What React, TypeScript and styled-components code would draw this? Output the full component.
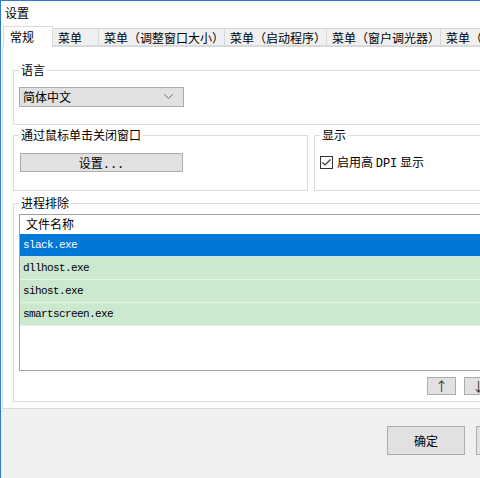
import styled, { createGlobalStyle } from "styled-components";

const GlobalStyle = createGlobalStyle`
  html, body {
    margin: 0;
    padding: 0;
    background: #ffffff;
    overflow: hidden;
  }
  * {
    box-sizing: border-box;
  }
`;

const uiFont = `"Noto Sans CJK SC", "Noto Sans", sans-serif`;
const monoFont = `"Liberation Mono", "Noto Sans CJK SC", monospace`;

const tabs = [
  "常规",
  "菜单",
  "菜单（调整窗口大小）",
  "菜单（启动程序）",
  "菜单（窗户调光器）",
  "菜单（托盘）",
];

const processes = ["slack.exe", "dllhost.exe", "sihost.exe", "smartscreen.exe"];

function App() {
  return (
    <>
      <GlobalStyle />
      <Window>
        <TitleBar>设置</TitleBar>
        <TabStrip>
          {tabs.map((label, i) => (
            <Tab key={label} $active={i === 0}>
              {label}
            </Tab>
          ))}
        </TabStrip>
        <TabPage>
          <GroupBox>
            <Legend>语言</Legend>
            <Select>
              <span>简体中文</span>
              <svg width="9" height="6" viewBox="0 0 9 6">
                <polyline points="0.5,0.5 4.5,4.5 8.5,0.5" fill="none" stroke="#6a6a6a" strokeWidth="1" />
              </svg>
            </Select>
          </GroupBox>

          <TwoColumns>
            <GroupBox $pad={18}>
              <Legend>通过鼠标单击关闭窗口</Legend>
              <WideButton>
                设置<Mono>...</Mono>
              </WideButton>
            </GroupBox>
            <GroupBox $pad={18}>
              <Legend>显示</Legend>
              <CheckRow>
                <CheckBox>
                  <svg width="11" height="11" viewBox="0 0 11 11">
                    <polyline points="1.5,5.5 4,8 9.5,2.5" fill="none" stroke="#333" strokeWidth="1.2" />
                  </svg>
                </CheckBox>
                <span>
                  启用高 <Mono>DPI</Mono> 显示
                </span>
              </CheckRow>
            </GroupBox>
          </TwoColumns>

          <GroupBox $pad={6} $gap={4}>
            <Legend>进程排除</Legend>
            <ListBox>
              <ListHeader>文件名称</ListHeader>
              {processes.map((name, i) => (
                <ListRow key={name} $selected={i === 0}>
                  {name}
                </ListRow>
              ))}
            </ListBox>
            <ArrowRow>
              <ArrowButton>↑</ArrowButton>
              <ArrowButton>↓</ArrowButton>
            </ArrowRow>
          </GroupBox>
        </TabPage>
        <Footer>
          <DialogButton>确定</DialogButton>
          <DialogButton>取消</DialogButton>
        </Footer>
      </Window>
    </>
  );
}

export default App;

const Window = styled.div`
  width: 566px;
  height: 478px;
  display: flex;
  flex-direction: column;
  border-left: 1px solid #2f7ccf;
  border-top: 1px solid #2f7ccf;
  background: #ffffff;
  font-family: ${uiFont};
  font-size: 12px;
  color: #000;
`;

const TitleBar = styled.div`
  height: 25px;
  padding-left: 4px;
  line-height: 24px;
  font-size: 12px;
`;

const TabStrip = styled.div`
  display: flex;
  align-items: flex-end;
  height: 21px;
  padding-left: 1px;
  margin: 0 1px;
  border-bottom: 1px solid #d9d9d9;
`;

const Tab = styled.div<{ $active?: boolean }>`
  flex: none;
  position: relative;
  min-width: ${({ $active }) => ($active ? "50px" : "46px")};
  height: ${({ $active }) => ($active ? "21px" : "18px")};
  margin-bottom: ${({ $active }) => ($active ? "-1px" : "0")};
  padding: 0 0 0 ${({ $active }) => ($active ? "6px" : "5px")};
  line-height: ${({ $active }) => ($active ? "19px" : "17px")};
  white-space: nowrap;
  background: ${({ $active }) => ($active ? "#ffffff" : "#f0f0f0")};
  border: 1px solid #d9d9d9;
  border-bottom: ${({ $active }) => ($active ? "none" : "1px solid #d9d9d9")};
  border-left: ${({ $active }) => ($active ? "1px solid #d9d9d9" : "none")};
  z-index: ${({ $active }) => ($active ? 1 : 0)};
`;

const TabPage = styled.div`
  display: flex;
  flex-direction: column;
  height: 362px;
  margin: 0 1px;
  padding: 15px 10px 0;
  background: #ffffff;
  border: 1px solid #d9d9d9;
  border-top: none;
`;

const GroupBox = styled.fieldset<{ $pad?: number; $gap?: number }>`
  min-width: 0;
  margin: ${({ $gap }) => $gap ?? 0}px 0 0;
  padding: 0 5px ${({ $pad }) => $pad ?? 17}px;
  border: 1px solid #dcdcdc;
`;

const Legend = styled.legend`
  padding: 0 2px;
  margin-left: 0;
  line-height: 16px;
  font-size: 12px;
`;

const TwoColumns = styled.div`
  display: grid;
  grid-template-columns: 295px 1fr;
  column-gap: 6px;
  margin-top: 2px;
`;

const Select = styled.div`
  display: flex;
  align-items: center;
  justify-content: space-between;
  width: 165px;
  height: 20px;
  margin-top: 9px;
  padding: 0 10px 0 3px;
  background: #e1e1e1;
  border: 1px solid #adadad;
  line-height: 18px;
`;

const WideButton = styled.div`
  width: 163px;
  height: 19px;
  margin-top: 10px;
  margin-left: 1px;
  text-align: center;
  line-height: 17px;
  background: #e1e1e1;
  border: 1px solid #adadad;
`;

const Mono = styled.span`
  font-family: ${monoFont};
  font-size: 12px;
  letter-spacing: 0;
`;

const CheckRow = styled.div`
  display: flex;
  align-items: center;
  gap: 4px;
  height: 19px;
  margin-top: 10px;
  line-height: 16px;
`;

const CheckBox = styled.div`
  display: flex;
  align-items: center;
  justify-content: center;
  width: 13px;
  height: 13px;
  background: #ffffff;
  border: 1px solid #333333;
`;

const ListBox = styled.div`
  height: 157px;
  margin-top: 3px;
  background: #ffffff;
  border: 1px solid #a0a0a0;
  border-right: none;
  overflow: hidden;
`;

const ListHeader = styled.div`
  height: 19px;
  padding-left: 6px;
  line-height: 18px;
`;

const ListRow = styled.div<{ $selected?: boolean }>`
  height: 23px;
  padding-left: 3px;
  line-height: 22px;
  font-family: ${monoFont};
  font-size: 11px;
  letter-spacing: -0.6px;
  color: ${({ $selected }) => ($selected ? "#ffffff" : "#000000")};
  background: ${({ $selected }) => ($selected ? "#0078d7" : "#cce8cf")};
  border-bottom: 1px solid ${({ $selected }) => ($selected ? "#c8e4f0" : "#e6f4e8")};
`;

const ArrowRow = styled.div`
  display: flex;
  justify-content: flex-end;
  gap: 8px;
  margin-top: 6px;
  padding-right: 55px;
`;

const ArrowButton = styled.div`
  width: 29px;
  height: 18px;
  text-align: center;
  line-height: 16px;
  font-size: 13px;
  color: #333;
  background: #e1e1e1;
  border: 1px solid #adadad;
`;

const Footer = styled.div`
  flex: 1;
  display: flex;
  justify-content: flex-end;
  align-items: flex-start;
  gap: 11px;
  padding: 17px 12px 0 0;
  background: #f0f0f0;
`;

const DialogButton = styled.div`
  width: 78px;
  height: 29px;
  text-align: center;
  line-height: 27px;
  font-size: 12px;
  background: #e1e1e1;
  border: 1px solid #adadad;
`;
